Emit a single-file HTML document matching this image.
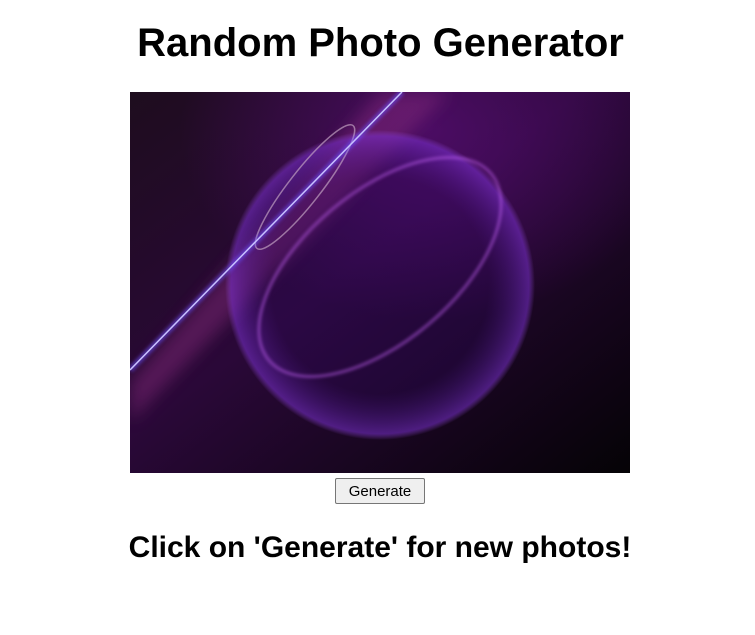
<!DOCTYPE html>
<html><head><style>
body{margin:0;background:#fff;font-family:"Liberation Sans",Arial,sans-serif;text-align:center;width:755px;height:635px;overflow:hidden}
h1{font-size:40px;font-weight:bold;margin:0;position:absolute;top:21px;left:0;width:761px}
svg{position:absolute;left:130px;top:92px}
button{position:absolute;left:335px;top:478px;width:90px;height:26px;font:15px "Liberation Sans",Arial,sans-serif;background:#efefef;border:1px solid #767676;border-radius:2px;padding:0;color:#000}
h2{font-size:30px;font-weight:bold;margin:0;position:absolute;top:531px;left:0;width:760px}
</style></head><body>
<h1>Random Photo Generator</h1>
<svg width="500" height="381" viewBox="0 0 500 381">
<defs>
<linearGradient id="bg" x1="0" y1="0" x2="1" y2="1">
<stop offset="0" stop-color="#1e0d1e"/><stop offset="0.45" stop-color="#2a0838"/><stop offset="1" stop-color="#050306"/>
</linearGradient>
<radialGradient id="glow" cx="0.6" cy="0.1" r="0.5">
<stop offset="0" stop-color="#5a0e78" stop-opacity="0.7"/><stop offset="1" stop-color="#5a0e78" stop-opacity="0"/>
</radialGradient>
<radialGradient id="sph" cx="0.5" cy="0.5" r="0.5">
<stop offset="0.7" stop-color="#30086a" stop-opacity="0.25"/><stop offset="0.96" stop-color="#7a30d0" stop-opacity="0.55"/><stop offset="1" stop-color="#9a50e0" stop-opacity="0"/>
</radialGradient>
<filter id="b"><feGaussianBlur stdDeviation="8"/></filter>
<filter id="b2"><feGaussianBlur stdDeviation="1.5"/></filter>
</defs>
<rect width="500" height="381" fill="url(#bg)"/>
<rect width="500" height="381" fill="url(#glow)"/>
<path d="M0 290 L250 0 L320 0 L0 330 Z" fill="#8a2a80" opacity="0.45" filter="url(#b)"/>
<circle cx="250" cy="193" r="155" fill="url(#sph)"/>
<ellipse cx="250" cy="175" rx="145" ry="75" transform="rotate(-40 250 175)" fill="none" stroke="#c060f0" stroke-width="2.5" opacity="0.6" filter="url(#b2)"/>
<ellipse cx="175" cy="95" rx="78" ry="16" transform="rotate(-52 175 95)" fill="none" stroke="#c0a0c0" stroke-width="1.5" opacity="0.7"/>
<line x1="0" y1="278" x2="272" y2="0" stroke="#6a50ff" stroke-width="6" opacity="0.5" filter="url(#b2)"/>
<line x1="0" y1="278" x2="272" y2="0" stroke="#c8c0ff" stroke-width="1.5"/>
</svg>
<button>Generate</button>
<h2>Click on 'Generate' for new photos!</h2>
</body></html>
